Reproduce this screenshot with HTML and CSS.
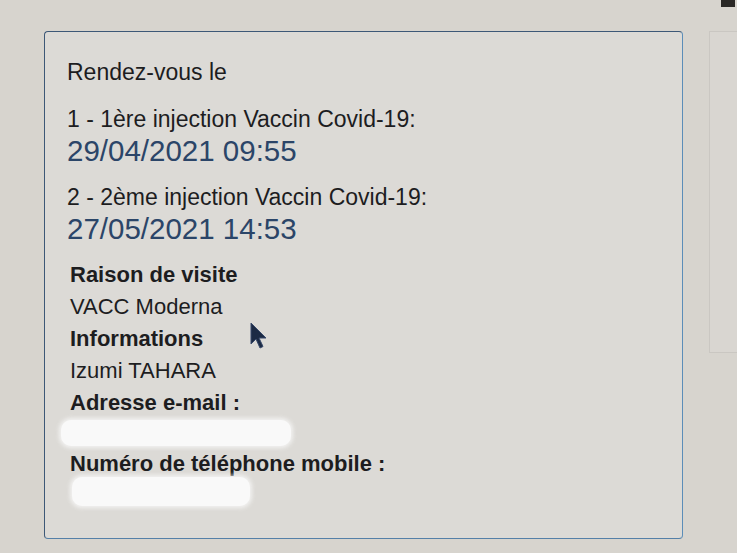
FILE: index.html
```html
<!DOCTYPE html>
<html lang="fr">
<head>
    <meta charset="UTF-8">
    <title>Rendez-vous</title>
    <link rel="stylesheet" href="styles.css">
</head>
<body>
    <div class="page">
        <div class="card">
            <div class="intro">Rendez-vous le</div>
            <div class="slot">
                <div class="slot-label">1 - 1ère injection Vaccin Covid-19:</div>
                <div class="slot-date">29/04/2021 09:55</div>
            </div>
            <div class="slot">
                <div class="slot-label">2 - 2ème injection Vaccin Covid-19:</div>
                <div class="slot-date">27/05/2021 14:53</div>
            </div>
            <div class="details">
                <div class="field-title">Raison de visite</div>
                <div class="field-value">VACC Moderna</div>
                <div class="field-title">Informations</div>
                <div class="field-value">Izumi TAHARA</div>
                <div class="field-title">Adresse e-mail :</div>
                <div class="hidden-row"><span class="blur blur-mail"></span></div>
                <div class="field-title">Numéro de téléphone mobile :</div>
                <div class="hidden-row"><span class="blur blur-phone"></span></div>
            </div>
            <svg class="cursor" width="20" height="28" viewBox="0 0 20 28">
                <path d="M2 1 L2 22 L7 17 L11 26 L14 24.5 L10 16 L17 16 Z" fill="#1c2a44" stroke="#38496a" stroke-width="1"/>
            </svg>
        </div>
        <div class="side"></div>
    </div>
    <span class="corner"></span>
</body>
</html>
```

FILE: styles.css
```css
body {
    margin: 0;
    background-color: #d7d4ce;
    font-family: "Liberation Sans", Arial, sans-serif;
    color: #1d1d1f;
    height: 553px;
    overflow: hidden;
    position: relative;
}
.page {
    display: flex;
    align-items: flex-start;
    padding: 31px 0 0 44px;
}
.card {
    position: relative;
    flex-shrink: 0;
    width: 599px;
    height: 482px;
    padding: 24px 16px 0 22px;
    background-color: #dcdad6;
    border: 1px solid #3d5877;
    border-right-color: #5b8db8;
    border-bottom-color: #5580a8;
    border-radius: 4px;
}
.intro {
    font-size: 23px;
    line-height: 32px;
    margin-bottom: 15px;
}
.slot {
    margin-bottom: 14px;
}
.slot-label {
    font-size: 23px;
    line-height: 32px;
}
.slot-date {
    font-size: 29.5px;
    line-height: 32px;
    color: #2b4568;
}
.details {
    padding-left: 3px;
    margin-top: 13px;
}
.field-title {
    font-size: 22px;
    line-height: 32px;
    font-weight: bold;
}
.field-value {
    font-size: 22px;
    line-height: 32px;
}
.hidden-row {
    height: 29px;
    position: relative;
}
.blur {
    position: absolute;
    background-color: #f9f9f9;
    border-radius: 10px;
    box-shadow: 0 0 4px 2px rgba(249, 249, 249, 0.8);
}
.blur-mail {
    left: -9px;
    top: 1px;
    width: 230px;
    height: 26px;
}
.blur-phone {
    left: 2px;
    top: -3px;
    width: 178px;
    height: 29px;
}
.cursor {
    position: absolute;
    left: 204px;
    top: 290px;
}
.side {
    flex-shrink: 0;
    margin-left: 26px;
    width: 40px;
    height: 320px;
    border: 1px solid #cac7c2;
    border-right: none;
    background-color: #d9d6d1;
}
.corner {
    position: absolute;
    top: 0;
    right: 2px;
    width: 14px;
    height: 7px;
    background-color: #2a2826;
}
```
